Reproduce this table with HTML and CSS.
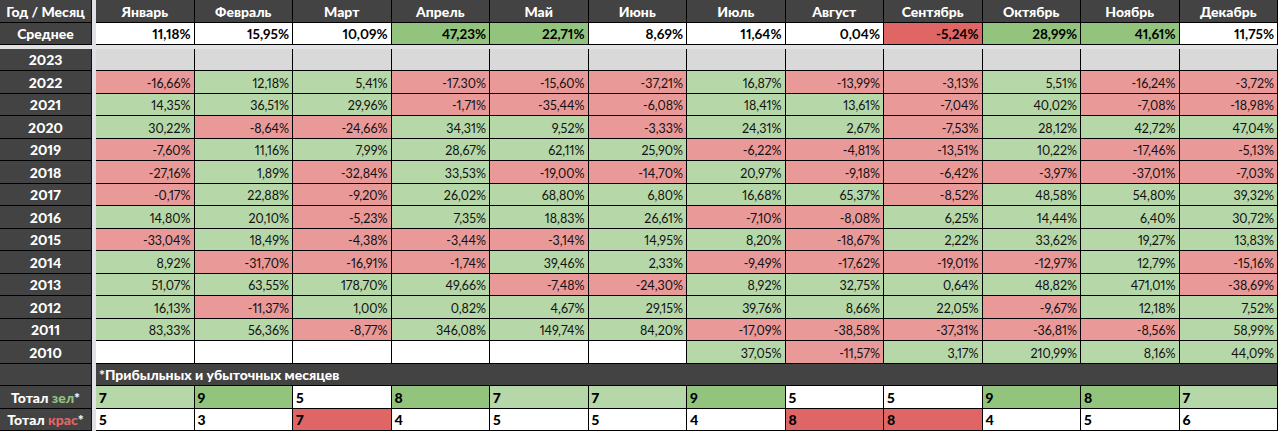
FILE: index.html
```html
<!DOCTYPE html>
<html lang="ru">
<head>
<meta charset="utf-8">
<title>Доходность по месяцам</title>
<link rel="stylesheet" href="styles.css">
</head>
<body>
<div class="sheet">
  <div class="row">
    <div class="lab">Год / Месяц</div>
    <div class="c hd">Январь</div><div class="c hd">Февраль</div><div class="c hd">Март</div><div class="c hd">Апрель</div><div class="c hd">Май</div><div class="c hd">Июнь</div><div class="c hd">Июль</div><div class="c hd">Август</div><div class="c hd">Сентябрь</div><div class="c hd">Октябрь</div><div class="c hd">Ноябрь</div><div class="c hd">Декабрь</div>
  </div>
  <div class="row avg">
    <div class="lab">Среднее</div>
    <div class="c b w">11,18%</div><div class="c b w">15,95%</div><div class="c b w">10,09%</div><div class="c b G">47,23%</div><div class="c b G">22,71%</div><div class="c b w">8,69%</div><div class="c b w">11,64%</div><div class="c b w">0,04%</div><div class="c b R">-5,24%</div><div class="c b G">28,99%</div><div class="c b G">41,61%</div><div class="c b w">11,75%</div>
  </div>
  <div class="row">
    <div class="lab">2023</div>
    <div class="c e"></div><div class="c e"></div><div class="c e"></div><div class="c e"></div><div class="c e"></div><div class="c e"></div><div class="c e"></div><div class="c e"></div><div class="c e"></div><div class="c e"></div><div class="c e"></div><div class="c e"></div>
  </div>
  <div class="row">
    <div class="lab">2022</div>
    <div class="c r">-16,66%</div><div class="c g">12,18%</div><div class="c g">5,41%</div><div class="c r">-17.30%</div><div class="c r">-15,60%</div><div class="c r">-37,21%</div><div class="c g">16,87%</div><div class="c r">-13,99%</div><div class="c r">-3,13%</div><div class="c g">5,51%</div><div class="c r">-16,24%</div><div class="c r">-3,72%</div>
  </div>
  <div class="row">
    <div class="lab">2021</div>
    <div class="c g">14,35%</div><div class="c g">36,51%</div><div class="c g">29,96%</div><div class="c r">-1,71%</div><div class="c r">-35,44%</div><div class="c r">-6,08%</div><div class="c g">18,41%</div><div class="c g">13,61%</div><div class="c r">-7,04%</div><div class="c g">40,02%</div><div class="c r">-7,08%</div><div class="c r">-18,98%</div>
  </div>
  <div class="row">
    <div class="lab">2020</div>
    <div class="c g">30,22%</div><div class="c r">-8,64%</div><div class="c r">-24,66%</div><div class="c g">34,31%</div><div class="c g">9,52%</div><div class="c r">-3,33%</div><div class="c g">24,31%</div><div class="c g">2,67%</div><div class="c r">-7,53%</div><div class="c g">28,12%</div><div class="c g">42,72%</div><div class="c g">47,04%</div>
  </div>
  <div class="row">
    <div class="lab">2019</div>
    <div class="c r">-7,60%</div><div class="c g">11,16%</div><div class="c g">7,99%</div><div class="c g">28,67%</div><div class="c g">62,11%</div><div class="c g">25,90%</div><div class="c r">-6,22%</div><div class="c r">-4,81%</div><div class="c r">-13,51%</div><div class="c g">10,22%</div><div class="c r">-17,46%</div><div class="c r">-5,13%</div>
  </div>
  <div class="row">
    <div class="lab">2018</div>
    <div class="c r">-27,16%</div><div class="c g">1,89%</div><div class="c r">-32,84%</div><div class="c g">33,53%</div><div class="c r">-19,00%</div><div class="c r">-14,70%</div><div class="c g">20,97%</div><div class="c r">-9,18%</div><div class="c r">-6,42%</div><div class="c r">-3,97%</div><div class="c r">-37,01%</div><div class="c r">-7,03%</div>
  </div>
  <div class="row">
    <div class="lab">2017</div>
    <div class="c r">-0,17%</div><div class="c g">22,88%</div><div class="c r">-9,20%</div><div class="c g">26,02%</div><div class="c g">68,80%</div><div class="c g">6,80%</div><div class="c g">16,68%</div><div class="c g">65,37%</div><div class="c r">-8,52%</div><div class="c g">48,58%</div><div class="c g">54,80%</div><div class="c g">39,32%</div>
  </div>
  <div class="row">
    <div class="lab">2016</div>
    <div class="c g">14,80%</div><div class="c g">20,10%</div><div class="c r">-5,23%</div><div class="c g">7,35%</div><div class="c g">18,83%</div><div class="c g">26,61%</div><div class="c r">-7,10%</div><div class="c r">-8,08%</div><div class="c g">6,25%</div><div class="c g">14,44%</div><div class="c g">6,40%</div><div class="c g">30,72%</div>
  </div>
  <div class="row">
    <div class="lab">2015</div>
    <div class="c r">-33,04%</div><div class="c g">18,49%</div><div class="c r">-4,38%</div><div class="c r">-3,44%</div><div class="c r">-3,14%</div><div class="c g">14,95%</div><div class="c g">8,20%</div><div class="c r">-18,67%</div><div class="c g">2,22%</div><div class="c g">33,62%</div><div class="c g">19,27%</div><div class="c g">13,83%</div>
  </div>
  <div class="row">
    <div class="lab">2014</div>
    <div class="c g">8,92%</div><div class="c r">-31,70%</div><div class="c r">-16,91%</div><div class="c r">-1,74%</div><div class="c g">39,46%</div><div class="c g">2,33%</div><div class="c r">-9,49%</div><div class="c r">-17,62%</div><div class="c r">-19,01%</div><div class="c r">-12,97%</div><div class="c g">12,79%</div><div class="c r">-15,16%</div>
  </div>
  <div class="row">
    <div class="lab">2013</div>
    <div class="c g">51,07%</div><div class="c g">63,55%</div><div class="c g">178,70%</div><div class="c g">49,66%</div><div class="c r">-7,48%</div><div class="c r">-24,30%</div><div class="c g">8,92%</div><div class="c g">32,75%</div><div class="c g">0,64%</div><div class="c g">48,82%</div><div class="c g">471,01%</div><div class="c r">-38,69%</div>
  </div>
  <div class="row">
    <div class="lab">2012</div>
    <div class="c g">16,13%</div><div class="c r">-11,37%</div><div class="c g">1,00%</div><div class="c g">0,82%</div><div class="c g">4,67%</div><div class="c g">29,15%</div><div class="c g">39,76%</div><div class="c g">8,66%</div><div class="c g">22,05%</div><div class="c r">-9,67%</div><div class="c g">12,18%</div><div class="c g">7,52%</div>
  </div>
  <div class="row">
    <div class="lab">2011</div>
    <div class="c g">83,33%</div><div class="c g">56,36%</div><div class="c r">-8,77%</div><div class="c g">346,08%</div><div class="c g">149,74%</div><div class="c g">84,20%</div><div class="c r">-17,09%</div><div class="c r">-38,58%</div><div class="c r">-37,31%</div><div class="c r">-36,81%</div><div class="c r">-8,56%</div><div class="c g">58,99%</div>
  </div>
  <div class="row">
    <div class="lab">2010</div>
    <div class="c w"></div><div class="c w"></div><div class="c w"></div><div class="c w"></div><div class="c w"></div><div class="c w"></div><div class="c g">37,05%</div><div class="c r">-11,57%</div><div class="c g">3,17%</div><div class="c g">210,99%</div><div class="c g">8,16%</div><div class="c g">44,09%</div>
  </div>
  <div class="row">
    <div class="lab"></div>
    <div class="note">*Прибыльных и убыточных месяцев</div>
  </div>
  <div class="row">
    <div class="lab"><span>Тотал <span class="tg">зел</span>*</span></div>
    <div class="c t g">7</div><div class="c t G">9</div><div class="c t w">5</div><div class="c t G">8</div><div class="c t g">7</div><div class="c t g">7</div><div class="c t G">9</div><div class="c t w">5</div><div class="c t w">5</div><div class="c t G">9</div><div class="c t G">8</div><div class="c t g">7</div>
  </div>
  <div class="row">
    <div class="lab"><span>Тотал <span class="tr">крас</span>*</span></div>
    <div class="c t w">5</div><div class="c t w">3</div><div class="c t R">7</div><div class="c t w">4</div><div class="c t w">5</div><div class="c t w">5</div><div class="c t w">4</div><div class="c t R">8</div><div class="c t R">8</div><div class="c t w">4</div><div class="c t w">5</div><div class="c t w">6</div>
  </div>
</div>
</body>
</html>
```
FILE: styles.css
```css
html, body {
  margin: 0;
  padding: 0;
  background: #ffffff;
}
body {
  font-family: Lato, "Open Sans", sans-serif;
  font-size: 12.5px;
  color: #111111;
  font-variant-numeric: proportional-nums;
}
.sheet {
  display: flex;
  flex-direction: column;
  width: 1278px;
  background: #dfe1e5;
}
.row {
  display: flex;
  height: 22.5px;
}
.row.avg {
  margin-bottom: 3.5px;
}
.lab {
  width: 92px;
  margin-right: 4px;
  box-sizing: border-box;
  background: #434343;
  color: #ffffff;
  font-weight: 900;
  font-size: 14px;
  border-right: 1px solid #111;
  border-bottom: 1px solid #000;
  display: flex;
  align-items: flex-end;
  justify-content: center;
  padding-bottom: 2px;
  white-space: nowrap;
}
.c {
  width: 98.5px;
  box-sizing: border-box;
  border-right: 1px solid #000;
  border-bottom: 1px solid #000;
  display: flex;
  align-items: flex-end;
  justify-content: flex-end;
  padding: 0 3px 2px 3px;
  white-space: nowrap;
}
.hd {
  background: #434343;
  color: #ffffff;
  font-weight: 900;
  font-size: 14px;
  justify-content: center;
}
.b { font-weight: 700; font-size: 13.5px; color: #000; }
.w { background: #ffffff; }
.e { background: #d9d9d9; }
.g { background: #b6d7a8; }
.r { background: #ea9999; }
.G { background: #93c47d; }
.R { background: #e06666; }
.t {
  justify-content: flex-start;
  font-weight: 900;
  font-size: 14px;
  color: #000;
}
.note {
  width: 1182px;
  box-sizing: border-box;
  background: #434343;
  color: #ffffff;
  font-weight: 900;
  font-size: 14px;
  border-bottom: 1px solid #000;
  border-right: 1px solid #000;
  display: flex;
  align-items: flex-end;
  padding: 0 3px 2px 3px;
}
.tg { color: #93c47d; }
.tr { color: #e06666; }
```
